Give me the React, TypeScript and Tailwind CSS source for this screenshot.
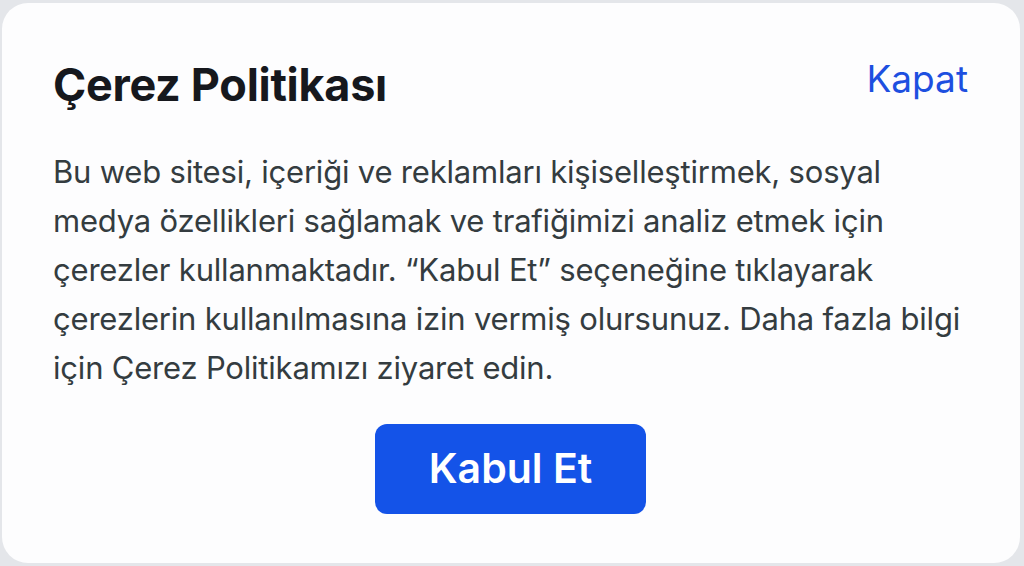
export default function App() {
  return (
    <div className="w-[1024px] h-[566px] bg-[#e4e6ea] pt-[3px] pb-[3px] pl-[2px] pr-[4px]" style={{ fontFamily: "Inter, 'Noto Sans', sans-serif" }}>
      <div className="h-full bg-[#fdfdfe] rounded-[26px] pl-[51px] pr-[52px] pt-[56px] flex flex-col">
        <div className="flex items-start justify-between">
          <h1 className="text-[45px] leading-[52px] font-bold text-[#16181d] tracking-[-0.3px]">Çerez Politikası</h1>
          <button className="text-[37px] leading-[48px] text-[#1d4fe0] mt-[-4px]">Kapat</button>
        </div>
        <p className="mt-[36px] text-[31px] leading-[49px] text-[#343c40] tracking-[-0.2px]">
          Bu web sitesi, içeriği ve reklamları kişiselleştirmek, sosyal medya özellikleri sağlamak ve trafiğimizi analiz etmek için çerezler kullanmaktadır. “Kabul Et” seçeneğine tıklayarak çerezlerin kullanılmasına izin vermiş olursunuz. Daha fazla bilgi için Çerez Politikamızı ziyaret edin.
        </p>
        <div className="flex justify-center mt-[32px]">
          <button className="w-[271px] h-[90px] rounded-[12px] bg-[#1453e8] text-white text-[41px] font-semibold">Kabul Et</button>
        </div>
      </div>
    </div>
  );
}
